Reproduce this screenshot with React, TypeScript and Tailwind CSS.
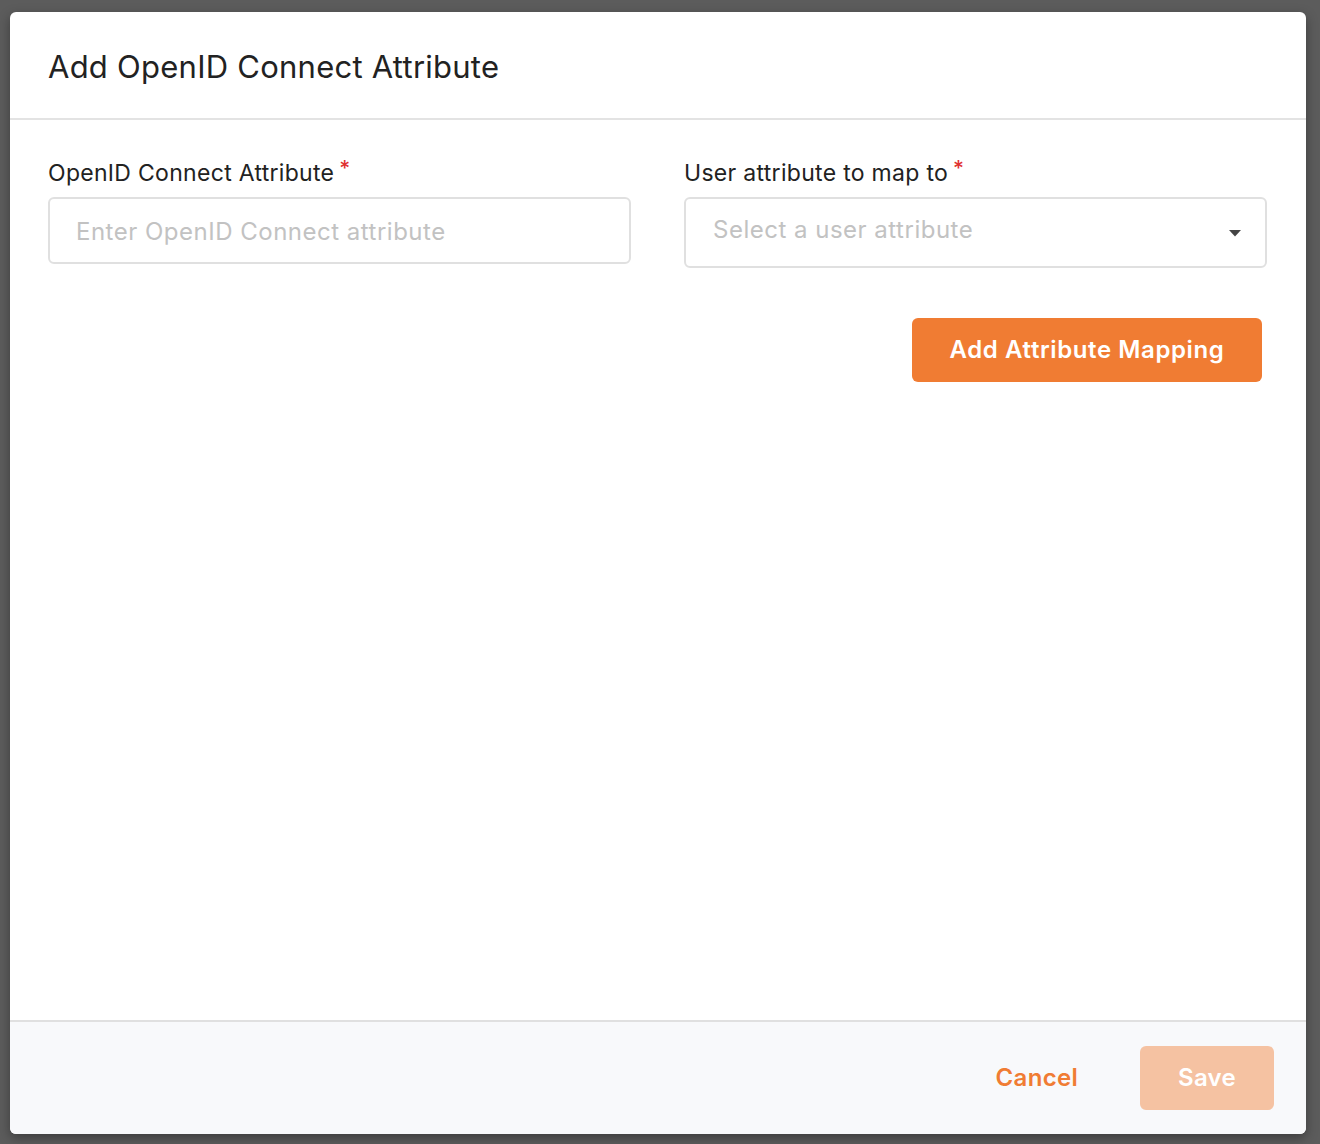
function Caret() {
  return (
    <svg width="14" height="8" viewBox="0 0 14 8" fill="none">
      <path d="M1 1h12L7 7.5z" fill="#444" />
    </svg>
  );
}

export default function App() {
  return (
    <div className="flex h-[1144px] w-[1320px] bg-[#5c5c5c] pl-[10px] pt-[12px] font-['Inter',sans-serif]">
      <div className="flex h-[1122px] w-[1296px] flex-col overflow-hidden rounded-[6px] bg-white shadow-[0_4px_12px_rgba(0,0,0,0.35)]">
        {/* Header */}
        <div className="flex h-[108px] shrink-0 items-center border-b-2 border-[#e3e3e3] px-[38px]">
          <h1 className="mt-[2px] text-[31px] font-normal leading-none tracking-[0.25px] text-[#222]">
            Add OpenID Connect Attribute
          </h1>
        </div>

        {/* Body */}
        <div className="flex flex-1 flex-col px-[38px] pt-[41px]">
          <div className="grid grid-cols-2 gap-[53px] pr-[1px]">
            <div className="flex flex-col">
              <label className="flex h-[24px] items-center text-[23px] leading-none tracking-[0.3px] text-[#222]">
                OpenID Connect Attribute
                <span className="ml-[5px] -mt-[10px] text-[21px] font-medium text-[#e03131]">*</span>
              </label>
              <input
                className="mt-[12px] h-[67px] rounded-[6px] border-2 border-[#e0e0e0] px-[26px] pt-[1px] text-[24px] tracking-[0.5px] text-[#222] outline-none placeholder:text-[#c2c2c2]"
                placeholder="Enter OpenID Connect attribute"
              />
            </div>
            <div className="flex flex-col">
              <label className="flex h-[24px] items-center text-[23px] leading-none tracking-[0.3px] text-[#222]">
                User attribute to map to
                <span className="ml-[5px] -mt-[10px] text-[21px] font-medium text-[#e03131]">*</span>
              </label>
              <div className="mt-[12px] flex h-[71px] items-center justify-between rounded-[6px] border-2 border-[#e0e0e0] pl-[27px] pr-[23px]">
                <span className="-mt-[5px] text-[24px] tracking-[0.5px] text-[#c2c2c2]">Select a user attribute</span>
                <Caret />
              </div>
            </div>
          </div>

          <div className="mt-[50px] flex justify-end pr-[6px]">
            <button className="h-[64px] w-[350px] rounded-[6px] bg-[#f07c33] text-[24px] font-semibold tracking-[0.6px] text-white">
              Add Attribute Mapping
            </button>
          </div>
        </div>

        {/* Footer */}
        <div className="flex h-[114px] shrink-0 items-center justify-end gap-[62px] border-t-2 border-[#e0e0e0] bg-[#f8f9fb] pr-[32px]">
          <button className="text-[24px] font-semibold tracking-[0.3px] text-[#f07c33]">Cancel</button>
          <button className="h-[64px] w-[134px] rounded-[6px] bg-[#f5c2a2] text-[24px] font-semibold tracking-[0.3px] text-white">
            Save
          </button>
        </div>
      </div>
    </div>
  );
}
